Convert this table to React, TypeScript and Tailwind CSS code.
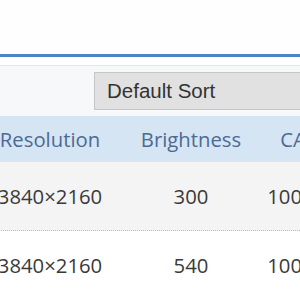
export default function App() {
  const rows = [
    { res: "3840×2160", bright: "300", ca: "100%", bg: "bg-[#f4f4f4]" },
    { res: "3840×2160", bright: "540", ca: "100%", bg: "bg-white" },
  ]

  return (
    <div className="w-[300px] h-[300px] overflow-hidden bg-white font-['Open_Sans',sans-serif]">
      <div className="h-[54px] bg-[#fefefe]" />
      <div className="h-[3px] bg-[#4a86c4]" />
      <div className="h-[9px] bg-white border-b border-[#e3e7ec]" />

      <div className="h-[50px] bg-[#f7f8fa] pt-[6px] pl-[94px]">
        <div className="h-[38px] w-[260px] bg-[#e1e1e1] border border-[#c6c6c6] pl-[12px] flex items-center font-['Liberation_Sans',Arial,sans-serif] text-[20.5px] text-[#333]">
          Default Sort
        </div>
      </div>

      <div className="ml-[-60px] flex h-[46px] bg-[#d5e5f3] text-[20.3px] text-[#4d6a93] whitespace-nowrap">
        <div className="w-[220px] min-w-0 shrink-0 flex justify-center items-center">Resolution</div>
        <div className="w-[62px] min-w-0 shrink-0 flex justify-center items-center">Brightness</div>
        <div className="w-[142px] min-w-0 shrink-0 flex justify-center items-center">CA</div>
      </div>

      {rows.map((r, i) => (
        <div
          key={i}
          className={`ml-[-60px] flex h-[69px] text-[20.3px] text-[#3a3a3a] whitespace-nowrap ${r.bg} ${i === 0 ? "border-b border-dotted border-[#b8b8b8]" : ""}`}
        >
          <div className="w-[220px] min-w-0 shrink-0 flex justify-center items-center">{r.res}</div>
          <div className="w-[62px] min-w-0 shrink-0 flex justify-center items-center">{r.bright}</div>
          <div className="w-[142px] min-w-0 shrink-0 flex justify-center items-center">{r.ca}</div>
        </div>
      ))}
    </div>
  )
}
